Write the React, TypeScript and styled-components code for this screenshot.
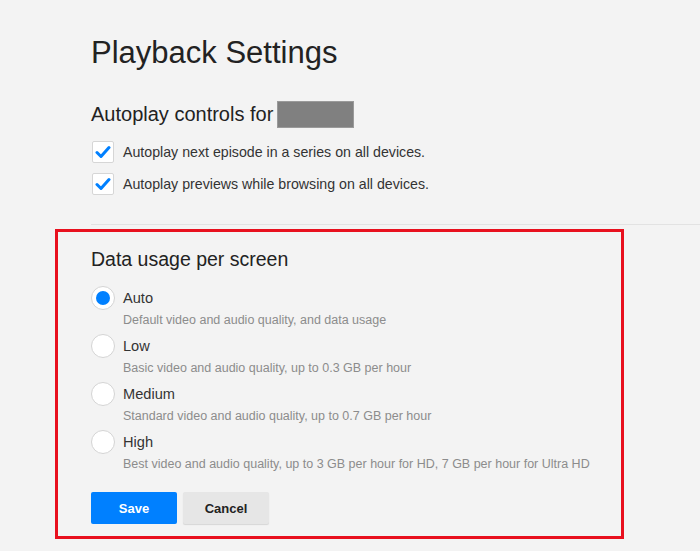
import React from "react";
import styled, { createGlobalStyle } from "styled-components";

const Global = createGlobalStyle`
  html, body { margin: 0; padding: 0; background: #f3f3f3; }
  body { font-family: "Liberation Sans", Arial, sans-serif; color: #333; }
  * { box-sizing: border-box; }
`;

const Page = styled.div`
  width: 700px;
  min-height: 551px;
  padding: 35px 0 0 55px;
  display: flex;
  flex-direction: column;
  overflow: hidden;
`;

const TopSection = styled.section`
  margin-left: 36px;
  padding-bottom: 29px;
  border-bottom: 1px solid #e2e2e2;
  display: flex;
  flex-direction: column;
`;

const Title = styled.h1`
  margin: 0;
  font-size: 31px;
  line-height: 36px;
  font-weight: 400;
  color: #222;
`;

const SubTitle = styled.h2`
  margin: 29px 0 0;
  display: flex;
  align-items: center;
  gap: 4px;
  height: 28px;
  font-size: 20px;
  font-weight: 400;
  color: #222;
`;

const Redacted = styled.span`
  display: inline-block;
  width: 77px;
  height: 27px;
  background: #808080;
  border: 1px solid #9a9a9a;
`;

const CheckList = styled.div`
  margin-top: 13px;
  display: flex;
  flex-direction: column;
  gap: 10px;
`;

const CheckRow = styled.label`
  display: flex;
  align-items: center;
  gap: 9px;
  height: 22px;
  font-size: 14.2px;
  color: #333;
  margin-left: 1px;
`;

const CheckBox = styled.span`
  width: 22px;
  height: 22px;
  background: #fff;
  border: 1px solid #d6d6d6;
  border-radius: 2px;
  display: flex;
  align-items: center;
  justify-content: center;
`;

const DataBox = styled.section`
  margin-top: 4px;
  width: 569px;
  border: 3px solid #e8101e;
  padding: 15px 0 12px 33px;
  display: flex;
  flex-direction: column;
`;

const SectionHeading = styled.h2`
  margin: 0;
  font-size: 19.5px;
  line-height: 24px;
  font-weight: 400;
  color: #222;
`;

const Options = styled.div`
  margin-top: 15px;
  display: flex;
  flex-direction: column;
  gap: 4px;
`;

const Option = styled.label`
  display: grid;
  grid-template-columns: 24px 1fr;
  column-gap: 8px;
`;

const Radio = styled.span<{ $checked?: boolean }>`
  width: 24px;
  height: 24px;
  border-radius: 50%;
  background: #fff;
  border: 1px solid #d4d4d4;
  display: flex;
  align-items: center;
  justify-content: center;
  &::after {
    content: "";
    width: 14px;
    height: 14px;
    border-radius: 50%;
    background: ${(p) => (p.$checked ? "#0080ff" : "transparent")};
  }
`;

const OptionLabel = styled.span`
  font-size: 14.6px;
  line-height: 24px;
  color: #333;
`;

const OptionDesc = styled.span`
  grid-column: 2;
  font-size: 12.5px;
  line-height: 20px;
  color: #8c8c8c;
`;

const Buttons = styled.div`
  margin-top: 18px;
  display: flex;
  gap: 6px;
`;

const Button = styled.button<{ $primary?: boolean }>`
  width: 86px;
  height: 32px;
  border: none;
  border-radius: 2px;
  font-family: "Liberation Sans", Arial, sans-serif;
  font-size: 13px;
  font-weight: 700;
  cursor: pointer;
  background: ${(p) => (p.$primary ? "#0080ff" : "#e6e6e6")};
  color: ${(p) => (p.$primary ? "#fff" : "#222")};
  box-shadow: ${(p) => (p.$primary ? "none" : "0 1px 1px rgba(0,0,0,0.12)")};
`;

const Check = () => (
  <svg width="16" height="14" viewBox="0 0 16 14">
    <path d="M2 7.5 L6 11.5 L14 2.5" fill="none" stroke="#0080ff" strokeWidth="3" strokeLinecap="round" strokeLinejoin="round" />
  </svg>
);

const options = [
  { label: "Auto", desc: "Default video and audio quality, and data usage", checked: true },
  { label: "Low", desc: "Basic video and audio quality, up to 0.3 GB per hour" },
  { label: "Medium", desc: "Standard video and audio quality, up to 0.7 GB per hour" },
  { label: "High", desc: "Best video and audio quality, up to 3 GB per hour for HD, 7 GB per hour for Ultra HD" },
];

export default function App() {
  return (
    <>
      <Global />
      <Page>
        <TopSection>
          <Title>Playback Settings</Title>
          <SubTitle>
            Autoplay controls for <Redacted />
          </SubTitle>
          <CheckList>
            <CheckRow>
              <CheckBox><Check /></CheckBox>
              Autoplay next episode in a series on all devices.
            </CheckRow>
            <CheckRow>
              <CheckBox><Check /></CheckBox>
              Autoplay previews while browsing on all devices.
            </CheckRow>
          </CheckList>
        </TopSection>
        <DataBox>
          <SectionHeading>Data usage per screen</SectionHeading>
          <Options>
            {options.map((o) => (
              <Option key={o.label}>
                <Radio $checked={o.checked} />
                <OptionLabel>{o.label}</OptionLabel>
                <OptionDesc>{o.desc}</OptionDesc>
              </Option>
            ))}
          </Options>
          <Buttons>
            <Button $primary>Save</Button>
            <Button>Cancel</Button>
          </Buttons>
        </DataBox>
      </Page>
    </>
  );
}
